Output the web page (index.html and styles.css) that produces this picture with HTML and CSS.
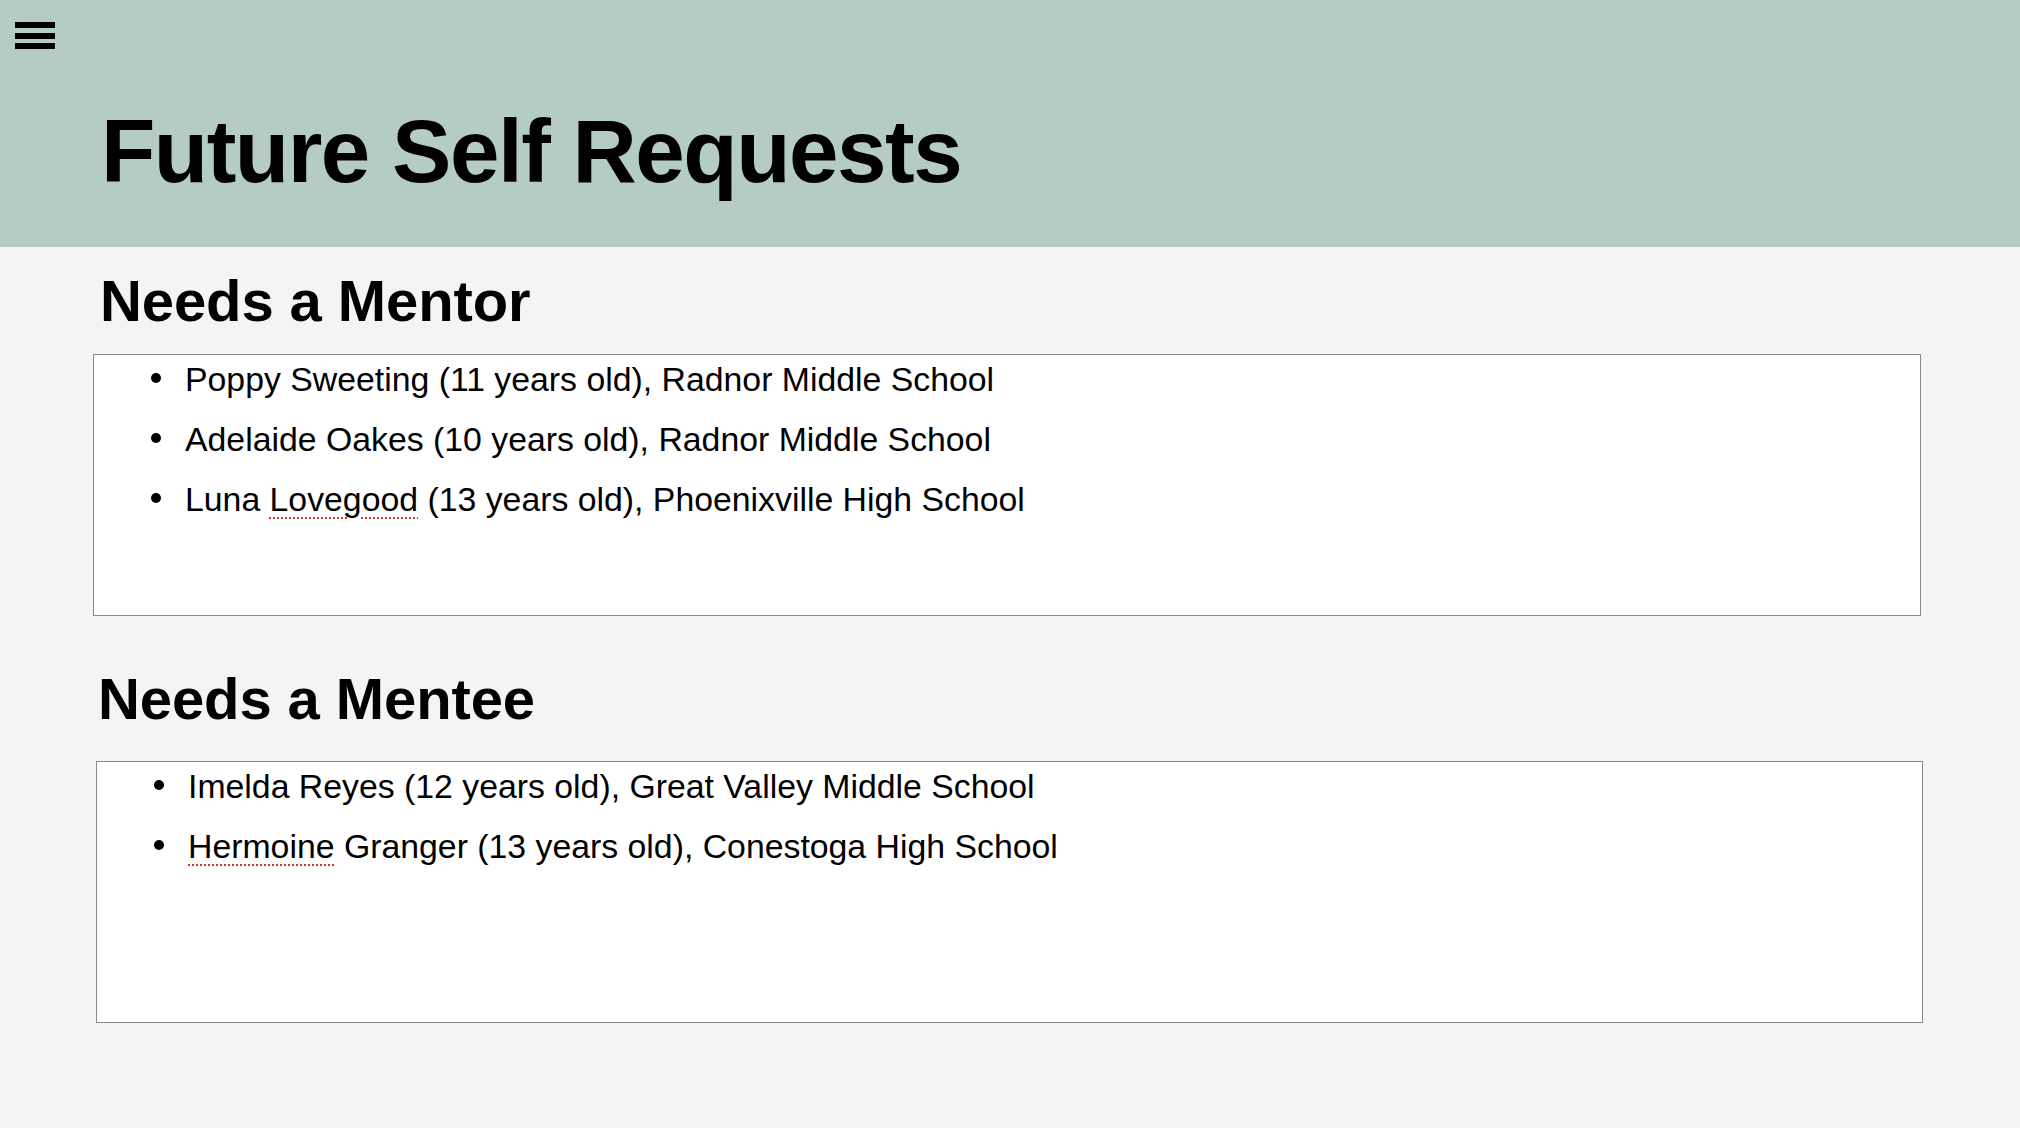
FILE: index.html
```html
<!DOCTYPE html>
<html lang="en">
<head>
<meta charset="utf-8">
<title>Future Self Requests</title>
<link rel="stylesheet" href="styles.css">
</head>
<body>
<header class="top">
  <div class="burger" aria-label="Menu">
    <span class="bar"></span>
    <span class="bar"></span>
    <span class="bar"></span>
  </div>
  <h1 class="title">Future Self Requests</h1>
</header>
<main class="content">
  <section class="group group-mentor">
    <h2 class="group-title">Needs a Mentor</h2>
    <div class="box">
      <ul class="list">
        <li>Poppy Sweeting (11 years old), Radnor Middle School</li>
        <li>Adelaide Oakes (10 years old), Radnor Middle School</li>
        <li>Luna <span class="spell">Lovegood</span> (13 years old), Phoenixville High School</li>
      </ul>
    </div>
  </section>
  <section class="group group-mentee">
    <h2 class="group-title">Needs a Mentee</h2>
    <div class="box">
      <ul class="list">
        <li>Imelda Reyes (12 years old), Great Valley Middle School</li>
        <li><span class="spell">Hermoine</span> Granger (13 years old), Conestoga High School</li>
      </ul>
    </div>
  </section>
</main>
</body>
</html>
```
FILE: styles.css
```css
html, body {
  margin: 0;
  padding: 0;
}
body {
  background: #f4f4f4;
  font-family: "Liberation Sans", Arial, Helvetica, sans-serif;
  color: #000;
  min-height: 1128px;
}
.top {
  background: #b5ccc6;
  padding: 22px 0 46px 15px;
  height: 179px;
  box-sizing: content-box;
}
.burger {
  width: 40px;
  display: flex;
  flex-direction: column;
  gap: 4.5px;
}
.bar {
  display: block;
  height: 6px;
  background: #000;
}
.title {
  margin: 52px 0 0 86px;
  font-size: 89px;
  line-height: 100px;
  font-weight: 700;
  letter-spacing: -1.5px;
}
.content {
  padding: 0;
}
.group-title {
  margin: 0;
  font-size: 58px;
  line-height: 66px;
  font-weight: 700;
  letter-spacing: -0.1px;
}
.group-mentor {
  margin-top: 21px;
  margin-left: 93px;
  width: 1828px;
}
.group-mentor .group-title {
  margin-left: 7px;
  margin-bottom: 20px;
}
.group-mentee {
  margin-top: 50px;
  margin-left: 96px;
  width: 1827px;
}
.group-mentee .group-title {
  margin-left: 2px;
  margin-bottom: 29px;
}
.box {
  box-sizing: border-box;
  height: 262px;
  background: #fff;
  border: 1px solid #8a8a8a;
}
.list {
  margin: 0;
  padding: 5px 0 0 91px;
  list-style: none;
  font-size: 33.8px;
  line-height: 38px;
}
.list li {
  position: relative;
  margin-bottom: 22px;
}
.list li::before {
  content: "";
  position: absolute;
  left: -34px;
  top: 13px;
  width: 10px;
  height: 10px;
  border-radius: 50%;
  background: #000;
}
.spell {
  text-decoration: underline dotted #d33;
  text-decoration-thickness: 2px;
  text-underline-offset: 6px;
}
```
